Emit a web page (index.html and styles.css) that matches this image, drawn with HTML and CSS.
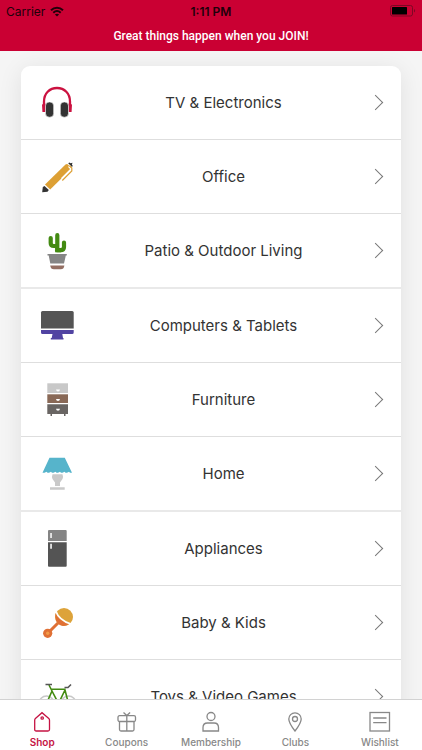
FILE: index.html
```html
<!DOCTYPE html>
<html lang="en">
<head>
<meta charset="utf-8">
<meta name="viewport" content="width=device-width, initial-scale=1">
<title>Shop</title>
<link rel="stylesheet" href="styles.css">
</head>
<body>
<header class="top">
  <div class="status">
    <span class="carrier">Carrier
      <svg class="wifi" width="14" height="11" viewBox="0 0 14 11" fill="none" stroke="currentColor" stroke-width="2"><path d="M1 4.2C4.500 .8 9.500 .8 13 4.200M3.300 6.700c2.200-2 5.200-2 7.400 0"/><path d="M7 10.500 4.900 8.400c1.200-1 3-1 4.200 0z" fill="currentColor" stroke="none"/></svg>
    </span>
    <span class="time">1:11 PM</span>
    <span class="power">
      <svg width="26" height="12" viewBox="0 0 26 12"><rect x=".5" y=".5" width="22" height="10.500" rx="2" fill="none" stroke="#7d0824"/><rect x="2" y="2" width="15" height="7.500" rx=".5" fill="#000"/><path d="M24 4c1.500.5 1.500 3 0 3.500z" fill="#7d0824"/></svg>
    </span>
  </div>
  <a class="banner" href="#join">Great things happen when you JOIN!</a>
</header>
<main class="content">
  <nav class="card" aria-label="Categories">
    <a class="row" href="#tv">
      <svg class="pic" viewBox="0 0 40 41"><path d="M7 30V19.500C7 11.500 12.500 6 20 6s13 5.500 13 13.500V30" fill="none" stroke="#cb1240" stroke-width="2.300"/><path d="M5 22.500l3.500-1V30H5.500zM35 22.500l-3.500-1V30h3z" fill="#cb1240"/><rect x="8.500" y="20" width="8.200" height="15.200" rx="3.800" fill="#333" stroke="#fff" stroke-width=".6"/><rect x="23.300" y="20" width="8.200" height="15.200" rx="3.800" fill="#333" stroke="#fff" stroke-width=".6"/></svg>
      <span class="name">TV &amp; Electronics</span><span class="chevron"></span>
    </a>
    <a class="row" href="#office">
      <svg class="pic" viewBox="0 0 40 41"><path d="M5.200 36.200 5.800 31 7.500 30 11.800 34 10.500 35.700z" fill="#333"/><path d="M8 28.500 28.500 8.500q1.500-1 2.500 0l2.500 2.500q1 1 0 2.500L13.200 33.500z" fill="#dda034"/><path d="M31.200 7.200l1.300-.8 1 .9 2-.6-.6 2 .9 1-.8 1.400z" fill="#333"/><path d="M31.500 10.500 34 13 24.500 22.500" fill="none" stroke="#fff" stroke-width="1.200"/><path d="M32.500 9.700l2.300 2.300v3L25.300 24.500" fill="none" stroke="#dda034" stroke-width="1.200"/></svg>
      <span class="name">Office</span><span class="chevron"></span>
    </a>
    <a class="row" href="#patio">
      <svg class="pic" viewBox="0 0 40 41"><path d="M20.300 20V5.200M13.700 8v5q0 3 3 3h3.600M27 12.500V17q0 3.200-3.500 3.200H20" fill="none" stroke="#438a12" stroke-width="4.200" stroke-linecap="round"/><path d="M18.200 18h6v4.300h-6z" fill="#438a12"/><path d="M10.500 24h19.300v1.500h-1L27 33.600H13.300L11.700 25.500h-1.200z" fill="#858585"/><path d="M13.200 35.500h14.200c-.5 2.800-1.500 3.800-3.500 3.800h-7c-2.200 0-3.200-1-3.700-3.800z" fill="#946f63"/></svg>
      <span class="name">Patio &amp; Outdoor Living</span><span class="chevron"></span>
    </a>
    <a class="row" href="#computers">
      <svg class="pic" viewBox="0 0 40 41"><path d="M4 23.500v-16Q4 6 5.500 6h29.700q1.500 0 1.500 1.500v16z" fill="#545454"/><path d="M4 25h32.700v2.500q0 1.500-1.500 1.500H25.300l.7 4h.5v1.400H13.800V33h.9l.8-4h-10Q4 29 4 27.500z" fill="#5143a2"/></svg>
      <span class="name">Computers &amp; Tablets</span><span class="chevron"></span>
    </a>
    <a class="row" href="#furniture">
      <svg class="pic" viewBox="0 0 40 41"><path d="M10.300 4.300H31V14H10.300z" fill="#c8c8c8"/><path d="M10.300 15.300H31V24H10.300z" fill="#896957"/><path d="M10.300 25.200H31V35h-2.500v2H27v-2H15v2h-1.500v-2h-3.200z" fill="#696563"/><path d="M19 10.500h4q-.3 2-2 2t-2-2zM19 20h4q-.3 2-2 2t-2-2zM19 29.800h4q-.3 2-2 2t-2-2z" fill="#fff"/></svg>
      <span class="name">Furniture</span><span class="chevron"></span>
    </a>
    <a class="row" href="#home">
      <svg class="pic" viewBox="0 0 40 41"><path d="M12.500 4.700h15.300L35 19.700h-2l-1-1-2 1h-1.500l-1-1-2 1H24l-1-1-2 1h-1.500l-1-1-2 1H15l-1-1-2 1h-1.500l-1-1-2 1H5.500z" fill="#56b4cb"/><path d="M15.500 21.300h10q1 2.500 0 4.700l-2.500 3.500V33h-5v-3.500L15.500 26q-1-2.200 0-4.700zM13 34.200h14.700v2.500H13z" fill="#c9c9c9"/></svg>
      <span class="name">Home</span><span class="chevron"></span>
    </a>
    <a class="row" href="#appliances">
      <svg class="pic" viewBox="0 0 40 41"><path d="M11 3q0-1 1-1h16.700q1 0 1 1v10H11z" fill="#848484"/><path d="M11 14.200h18.700v23.500q0 1-1 1H12q-1 0-1-1z" fill="#545454"/><path d="M13.200 5h1.700v5h-1.700zM13.200 15.800h1.700v5h-1.700z" fill="#eee"/></svg>
      <span class="name">Appliances</span><span class="chevron"></span>
    </a>
    <a class="row" href="#baby">
      <svg class="pic" viewBox="0 0 40 41"><path d="M12 30l9-9" stroke="#e07035" stroke-width="3"/><circle cx="10.700" cy="31.300" r="4.600" fill="#e07035"/><circle cx="10.700" cy="31.300" r="1.700" fill="#f29b48"/><circle cx="27" cy="15" r="9" fill="#dda33a"/><path d="M18.500 11Q18 15 19 18.500q2 4.500 7 5.500 3.500 0 6-2Q22.500 19 18.500 11z" fill="#e07035"/><path d="M18.500 8.500Q22 18.500 34 22" fill="none" stroke="#fff" stroke-width="1.800"/></svg>
      <span class="name">Baby &amp; Kids</span><span class="chevron"></span>
    </a>
    <a class="row" href="#toys">
      <svg class="pic" viewBox="0 0 40 41" fill="none"><circle cx="9.500" cy="27.500" r="7.500" stroke="#c8c8c8" stroke-width="1.500"/><circle cx="31.500" cy="27.500" r="7.500" stroke="#c8c8c8" stroke-width="1.500"/><path d="M9.500 27.500 15 15l6.500 12.500zM21.500 27.500 28 14l3.500 13.500M28 13.200H13.500M12 9l3 6" stroke="#438a12" stroke-width="1.600"/><path d="M8.500 8.500H15M27.500 11.500h3.500l3-3" stroke="#555" stroke-width="1.600"/></svg>
      <span class="name">Toys &amp; Video Games</span><span class="chevron"></span>
    </a>
  </nav>
</main>
<nav class="tabs" aria-label="Main">
  <a class="tab active" href="#shop" aria-current="page"><svg viewBox="0 0 24 24"><path d="M4.700 10.200q0-1 .7-1.600L12 2.700l6.800 5.900q.7.600.7 1.600v9.300q0 1.500-1.500 1.500H6.200q-1.500 0-1.500-1.500z"/><circle cx="12.200" cy="8" r="1.200"/></svg>Shop</a>
  <a class="tab" href="#coupons"><svg viewBox="0 0 24 24"><rect x="3" y="5.700" width="17.500" height="5.800" rx="1.500"/><path d="M4.500 11.500v8q0 1.500 1.500 1.500h11.500q1.500 0 1.500-1.500v-8M11.800 5.700V21M8.500 2.500l3.300 3 3.300-3"/></svg>Coupons</a>
  <a class="tab" href="#membership"><svg viewBox="0 0 24 24"><circle cx="12" cy="6.500" r="4"/><path d="M4 21v-3.500q0-4.500 4.500-4.500h6.500q4.500 0 4.500 4.500V21z"/></svg>Membership</a>
  <a class="tab" href="#clubs"><svg viewBox="0 0 24 24"><path d="M12 21C8.500 16.500 5.800 12.500 5.800 9a6.200 6.200 0 0 1 12.400 0c0 3.500-2.700 7.500-6.200 12z"/><circle cx="12" cy="9" r="2.500"/></svg>Clubs</a>
  <a class="tab" href="#wishlist"><svg viewBox="0 0 24 24"><rect x="2" y="2.500" width="19.500" height="18.500"/><path d="M5.200 8h13.300M5.200 12.700h13.300"/></svg>Wishlist</a>
</nav>
</body>
</html>
```
FILE: styles.css
```css
* { box-sizing: border-box; }

body {
  margin: 0;
  height: 100vh;
  display: flex;
  flex-direction: column;
  background: #f5f5f5;
  font-family: Inter, "Liberation Sans", sans-serif;
}

a { color: inherit; text-decoration: none; }

.top {
  background: #ca0033;
  color: #fff;
}

.status {
  display: grid;
  grid-template-columns: 1fr auto 1fr;
  align-items: center;
  height: 22px;
  padding: 0 6px;
  color: #20000a;
  font-size: 12px;
}

.carrier { display: flex; align-items: center; gap: 5px; }
.time { font-weight: 600; }
.power { display: flex; justify-content: flex-end; }

.banner {
  display: block;
  height: 29px;
  line-height: 28px;
  text-align: center;
  font-family: Roboto, sans-serif;
  font-size: 12px;
  font-weight: 500;
}

.content {
  flex: 1;
  min-height: 0;
  overflow-y: auto;
  scrollbar-width: none;
  padding: 15px 21px;
}

.card {
  background: #fff;
  border-radius: 9px;
  box-shadow: 0 4px 24px rgba(0, 0, 0, 0.09);
}

.row {
  display: grid;
  grid-template-columns: 71px 1fr 46px;
  align-items: center;
  justify-items: center;
  height: 74px;
  border-bottom: 1px solid #dedede;
  color: #333;
  font-size: 15px;
}

.row:nth-child(3n) {
  height: 75px;
  border-bottom: 2px solid #e9e9e9;
}

.pic { width: 40px; height: 41px; }

.chevron {
  width: 11px;
  height: 11px;
  border: solid #777;
  border-width: 1px 1px 0 0;
  margin-right: 6px;
  transform: rotate(45deg);
}

.tabs {
  display: grid;
  grid-template-columns: repeat(5, 1fr);
  height: 51px;
  background: #fff;
  border-top: 1px solid #d2d2d2;
}

.tab {
  display: flex;
  flex-direction: column;
  align-items: center;
  padding-top: 10px;
  color: #888;
  font-size: 10px;
  font-weight: 500;
  line-height: 17px;
}

.tab svg {
  width: 24px;
  height: 24px;
  fill: none;
  stroke: currentColor;
  stroke-width: 1.3;
}

.tab.active { color: #c51343; font-weight: 600; }
```
